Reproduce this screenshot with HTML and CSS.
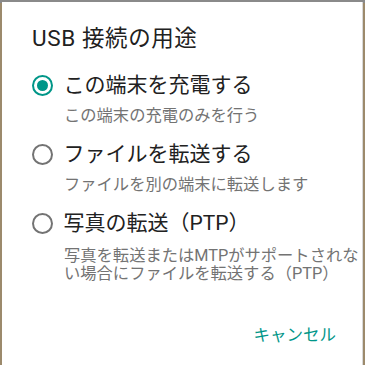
FILE: index.html
```html
<!DOCTYPE html>
<html lang="ja">
<head>
<meta charset="utf-8">
<link rel="stylesheet" href="styles.css">
</head>
<body>
<div class="dialog">
  <h1 class="title">USB 接続の用途</h1>
  <div class="options">
    <div class="option">
      <div class="row"><span class="radio checked"></span><span class="label">この端末を充電する</span></div>
      <p class="sub s1">この端末の充電のみを行う</p>
    </div>
    <div class="option o2">
      <div class="row"><span class="radio"></span><span class="label">ファイルを転送する</span></div>
      <p class="sub s2">ファイルを別の端末に転送します</p>
    </div>
    <div class="option o3">
      <div class="row"><span class="radio"></span><span class="label">写真の転送（PTP）</span></div>
      <p class="sub s3">写真を転送またはMTPがサポートされな<br>い場合にファイルを転送する（PTP）</p>
    </div>
  </div>
  <div class="actions"><span class="btn">キャンセル</span></div>
</div>
</body>
</html>
```
FILE: styles.css
```css
html, body {
  margin: 0;
  padding: 0;
  height: 365px;
  overflow: hidden;
}
body {
  background: linear-gradient(to bottom, #8a8a8a 0, #8a8a8a 3px, #9c8a6c 3px);
  font-family: Roboto, "Noto Sans CJK JP", sans-serif;
}
.dialog {
  margin: 2px 3px 0 2px;
  height: 363px;
  background: #fff;
  box-shadow: 1px 0 0 #d8d8d8;
  box-sizing: border-box;
  padding: 21px 0 0 30px;
}
.title {
  margin: 0;
  font-size: 22.5px;
  letter-spacing: 0.6px;
  font-weight: 400;
  line-height: 30px;
  color: #212121;
}
.options {
  margin-top: 17px;
}
.row {
  display: flex;
  align-items: center;
  height: 30px;
}
.radio {
  box-sizing: border-box;
  width: 21px;
  height: 21px;
  border-radius: 50%;
  border: 2px solid #737373;
  margin-right: 11px;
  margin-left: -0.5px;
  flex: none;
  display: flex;
  align-items: center;
  justify-content: center;
}
.radio.checked {
  border-color: #009688;
}
.radio.checked::after {
  content: "";
  width: 11px;
  height: 11px;
  border-radius: 50%;
  background: #009688;
}
.label {
  font-size: 21px;
  line-height: 30px;
  color: #212121;
}
.sub {
  margin: 6px 0 0 32px;
  font-size: 16.3px;
  line-height: 20px;
  color: #737373;
}
.o2 { margin-top: 13px; }
.o3 { margin-top: 13px; }
.s2 { margin-top: 6px; }
.s3 {
  margin-top: 9px;
  line-height: 18px;
}
.actions {
  display: flex;
  justify-content: flex-end;
  margin-top: 43px;
  padding-right: 26px;
}
.btn {
  font-size: 16.5px;
  line-height: 20px;
  color: #009688;
}
```
